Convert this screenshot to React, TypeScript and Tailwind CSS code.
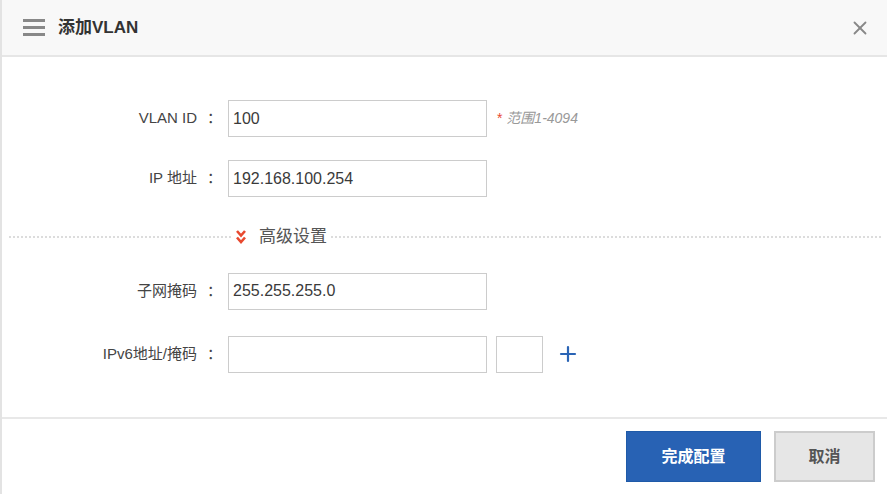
import { Plus, X } from "lucide-react"

function Field({ label, value, children }: { label: string; value?: string; children?: React.ReactNode }) {
  return (
    <div className="flex items-center h-[37px]">
      <div className="w-[220px] flex justify-end text-[15px] text-[#444]">
        <span>{label}</span>
        <span className="ml-[10px]">：</span>
      </div>
      <div className="ml-[6px] w-[259px] h-[37px] border border-[#cccccc] bg-white flex items-center px-[4px] text-[16px] text-[#3a3a3a]">
        {value}
      </div>
      {children}
    </div>
  )
}

export default function App() {
  return (
    <div
      className="w-[887px] h-[494px] bg-white border-l-2 border-[#e3e3e3] flex flex-col overflow-hidden"
      style={{ fontFamily: '"Liberation Sans", "Noto Sans CJK SC", sans-serif' }}
    >
      <div className="h-[57px] bg-[#f8f8f8] border-b-2 border-[#e6e6e6] flex items-center pl-[21px] pr-[16px] shrink-0">
        <div className="flex flex-col gap-[4px] w-[22px]">
          <span className="h-[3px] bg-[#888]" />
          <span className="h-[3px] bg-[#888]" />
          <span className="h-[3px] bg-[#888]" />
        </div>
        <div className="ml-[13px] text-[17px] font-bold text-[#333]">添加VLAN</div>
        <X className="ml-auto w-[22px] h-[22px] text-[#888]" strokeWidth={2} />
      </div>

      <div className="flex-1 flex flex-col pt-[43px]">
        <Field label="VLAN ID" value="100">
          <span className="ml-[10px] text-[14px] italic text-[#999]">
            <span className="text-[#e8492f] not-italic">*</span> 范围1-4094
          </span>
        </Field>
        <div className="mt-[23px]">
          <Field label="IP 地址" value="192.168.100.254" />
        </div>

        <div className="mt-[27px] flex items-center pl-[7px] pr-[6px]">
          <div className="w-[222px] border-t-2 border-dotted border-[#dcdcdc]" />
          <div className="flex items-center px-[4px] text-[17px] text-[#555]">
            <svg width="12" height="16" viewBox="0 0 12 16" className="mr-[12px]">
              <path d="M2 2 L6 6.5 L10 2" stroke="#e8492f" strokeWidth="2.6" fill="none" />
              <path d="M2 8.5 L6 13 L10 8.5" stroke="#e8492f" strokeWidth="2.6" fill="none" />
            </svg>
            高级设置
          </div>
          <div className="flex-1 border-t-2 border-dotted border-[#dcdcdc]" />
        </div>

        <div className="mt-[23px]">
          <Field label="子网掩码" value="255.255.255.0" />
        </div>
        <div className="mt-[26px]">
          <Field label="IPv6地址/掩码">
            <div className="ml-[9px] w-[47px] h-[37px] border border-[#cccccc] bg-white" />
            <Plus className="ml-[13px] w-[24px] h-[24px] text-[#2a64b5]" strokeWidth={2.2} />
          </Field>
        </div>
      </div>

      <div className="h-[77px] border-t-2 border-[#e8e8e8] flex items-start justify-end pt-[12px] pr-[12px] gap-[13px] shrink-0">
        <button className="w-[135px] h-[51px] bg-[#2862b4] border border-[#1f5aa8] text-white text-[16px] font-bold">
          完成配置
        </button>
        <button className="w-[101px] h-[51px] bg-[#e6e6e6] border-2 border-[#cccccc] text-[#555] text-[16px] font-bold">
          取消
        </button>
      </div>
    </div>
  )
}
